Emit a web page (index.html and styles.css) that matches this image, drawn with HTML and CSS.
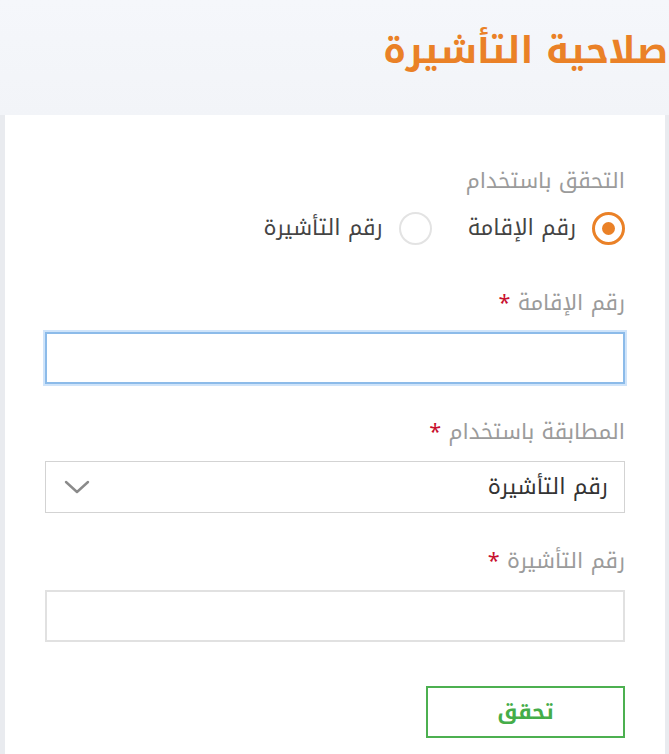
FILE: index.html
```html
<!DOCTYPE html>
<html lang="ar" dir="rtl">
<head>
<meta charset="utf-8">
<title>صلاحية التأشيرة</title>
<link rel="stylesheet" href="styles.css">
</head>
<body>
<div class="page">
  <header class="header">
    <h1 class="title">صلاحية التأشيرة</h1>
  </header>
  <main class="card">
    <div class="group-label">التحقق باستخدام</div>
    <div class="radios">
      <label class="radio">
        <span class="circle checked"><span class="dot"></span></span>
        <span class="radio-text">رقم الإقامة</span>
      </label>
      <label class="radio">
        <span class="circle"></span>
        <span class="radio-text">رقم التأشيرة</span>
      </label>
    </div>

    <div class="field first">
      <div class="label">رقم الإقامة <span class="req">*</span></div>
      <div class="input focused"></div>
    </div>

    <div class="field">
      <div class="label">المطابقة باستخدام <span class="req">*</span></div>
      <div class="select">
        <span class="select-text">رقم التأشيرة</span>
        <svg class="chevron" width="26" height="16" viewBox="0 0 26 16"><path d="M2 3 L13 13 L24 3" fill="none" stroke="#8a8a8a" stroke-width="2.4" stroke-linecap="round" stroke-linejoin="round"/></svg>
      </div>
    </div>

    <div class="field">
      <div class="label">رقم التأشيرة <span class="req">*</span></div>
      <div class="input plain"></div>
    </div>

    <div class="actions">
      <button class="btn">تحقق</button>
    </div>
  </main>
</div>
</body>
</html>
```

FILE: styles.css
```css
* { box-sizing: border-box; }
html, body { margin: 0; padding: 0; }
body {
  background: #e9ebef;
  font-family: "Noto Kufi Arabic", "Noto Sans Arabic", "DejaVu Sans", sans-serif;
  width: 669px;
  height: 754px;
  overflow: hidden;
}
.page {
  min-height: 754px;
  padding: 0 4px 0 5px;
  background-image: linear-gradient(to bottom, #f5f7fb 0, #f2f4f8 115px, #e9ebef 115px);
}
.header {
  height: 115px;
  display: flex;
  align-items: flex-start;
  justify-content: flex-start;
  padding-right: 0;
}
.title {
  margin: 24px -3px 0 0;
  color: #ea8127;
  font-size: 36.8px;
  font-weight: bold;
  line-height: 54px;
}
.card {
  background: #fff;
  height: 639px;
  padding: 51px 40px 0 40px;
}
.group-label {
  color: #9b9b9b;
  font-size: 21.6px;
  line-height: 30px;
  height: 30px;
}
.radios {
  display: flex;
  gap: 36px;
  margin-top: 14px;
  height: 36px;
  align-items: center;
}
.radio {
  display: flex;
  align-items: center;
  gap: 16px;
}
.circle {
  width: 33px;
  height: 33px;
  border-radius: 50%;
  border: 2px solid #e3e3e3;
  display: flex;
  align-items: center;
  justify-content: center;
}
.circle.checked {
  border: 3px solid #ea8127;
}
.dot {
  width: 13px;
  height: 13px;
  border-radius: 50%;
  background: #ea8127;
}
.radio-text {
  font-size: 21.8px;
  color: #444;
  line-height: 30px;
}
.field { margin-top: 33px; }
.field.first { margin-top: 42px; }
.label {
  color: #9b9b9b;
  font-size: 21.6px;
  line-height: 30px;
  height: 30px;
  margin-bottom: 14px;
}
.req { color: #c8102e; }
.input {
  height: 52px;
  background: #fff;
}
.input.focused {
  border: 2px solid #8cbbe9;
  box-shadow: 0 0 0 2px #cfe4fa;
}
.input.plain {
  border: 2px solid #e1e1e1;
}
.select {
  height: 52px;
  border: 1.5px solid #d3d3d3;
  display: flex;
  align-items: center;
  justify-content: space-between;
  padding: 0 16px 0 18px;
}
.select-text {
  font-size: 22px;
  color: #333;
}
.chevron { display: block; }
.actions {
  margin-top: 44px;
  display: flex;
}
.btn {
  width: 199px;
  height: 52px;
  border: 2px solid #4cb050;
  background: #fff;
  color: #45ad49;
  font-family: inherit;
  font-size: 21px;
  font-weight: bold;
  padding: 0;
}
```
